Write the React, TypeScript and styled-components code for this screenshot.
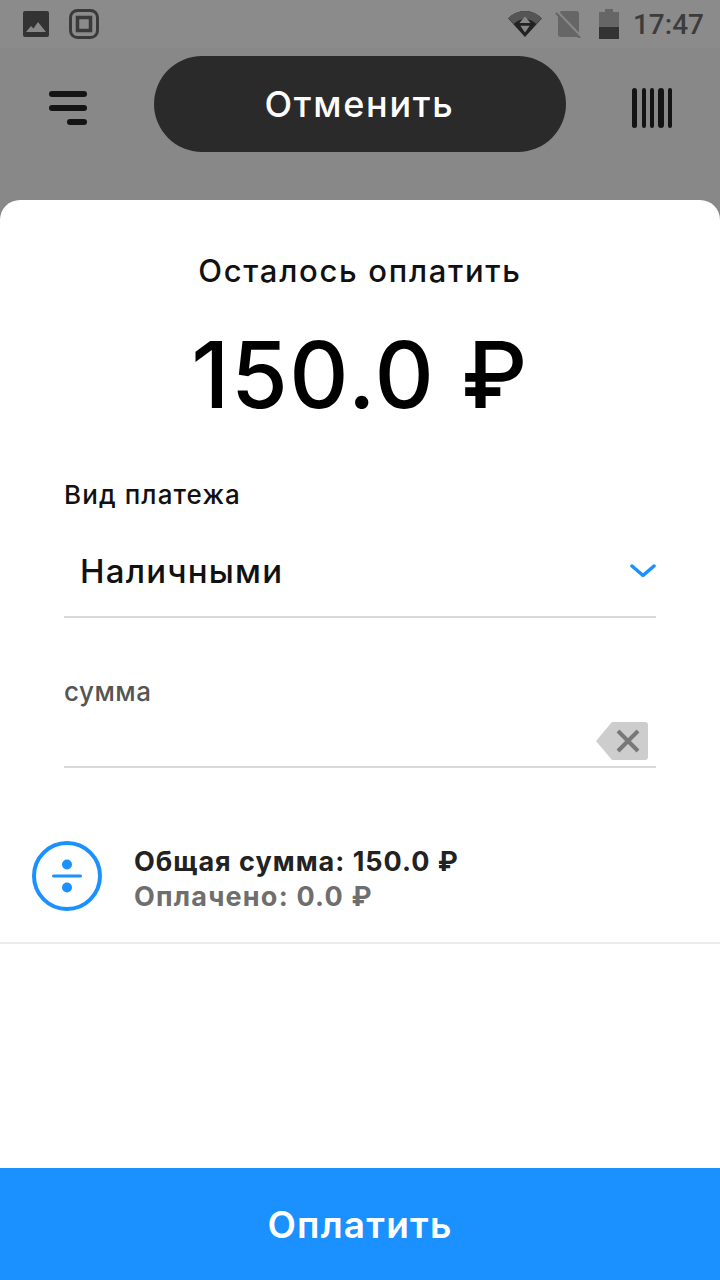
import styled, { createGlobalStyle } from "styled-components";

const GlobalStyle = createGlobalStyle`
  html, body {
    margin: 0;
    padding: 0;
    background: #888888;
  }
  * {
    box-sizing: border-box;
  }
`;

const FONT = `Inter, "Noto Sans", sans-serif`;

function App() {
  return (
    <Page>
      <GlobalStyle />
      <StatusBar>
        <StatusGroup>
          <svg width="26" height="26" viewBox="0 0 26 26">
            <rect x="0" y="0" width="26" height="26" rx="2" fill="#333" />
            <path d="M3 21l5-6 2.500 2.500L15 11l8 10z" fill="#888" />
          </svg>
          <svg width="30" height="30" viewBox="0 0 30 30" fill="none">
            <rect x="1.500" y="1.500" width="27" height="27" rx="7" stroke="#3a3a3a" strokeWidth="3" />
            <rect x="8.500" y="8.500" width="13" height="13" stroke="#3a3a3a" strokeWidth="3.500" />
          </svg>
        </StatusGroup>
        <StatusRight>
          <svg width="34" height="28" viewBox="0 0 36 30">
            <path d="M0 9C5 4 11 1 18 1s13 3 18 8L18 29z" fill="#222" />
            <path d="M0 9C5 4 11 1 18 1s13 3 18 8l-6 6c-3-3-7-5-12-5S9 12 6 15z" fill="#555" />
            <path d="M18 7l6 7H12zM18 24l-5-7h10z" fill="#888" />
          </svg>
          <svg width="26" height="28" viewBox="0 0 26 28" fill="none">
            <path d="M6 1h15a3 3 0 0 1 3 3v23H6a3 3 0 0 1-3-3V5z" fill="#666" />
            <path d="M1 3l24 25" stroke="#666" strokeWidth="2.500" />
            <path d="M1 0l24 25" stroke="#888" strokeWidth="2" />
          </svg>
          <BatteryIcon width="20" height="30" viewBox="0 0 20 30">
            <path d="M6 0h8v3h6v27H0V3h6z" fill="#666" />
            <rect x="0" y="18" width="20" height="12" fill="#333" />
          </BatteryIcon>
          <Clock>17:47</Clock>
        </StatusRight>
      </StatusBar>
      <Header>
        <MenuIcon width="38" height="34" viewBox="0 0 38 34" fill="#141414">
          <rect x="0" y="0" width="38" height="6" rx="3" />
          <rect x="0" y="14" width="38" height="6" rx="3" />
          <rect x="18" y="28" width="20" height="6" rx="3" />
        </MenuIcon>
        <CancelButton>Отменить</CancelButton>
        <MenuIcon width="40" height="40" viewBox="0 0 40 40" fill="#141414">
          <rect x="0" y="0" width="5" height="40" rx="2.500" />
          <rect x="10" y="0" width="4" height="40" rx="2" />
          <rect x="18" y="0" width="4" height="40" rx="2" />
          <rect x="26" y="0" width="6" height="40" rx="3" />
          <rect x="36" y="0" width="4" height="40" rx="2" />
        </MenuIcon>
      </Header>
      <Sheet>
        <Title>Осталось оплатить</Title>
        <Amount>150.0 ₽</Amount>
        <Form>
          <FieldLabel>Вид платежа</FieldLabel>
          <SelectRow>
            <SelectValue>Наличными</SelectValue>
            <svg width="26" height="14" viewBox="0 0 26 14" fill="none">
              <path d="M2 2l11 9.500L24 2" stroke="#1a91ff" strokeWidth="3.500" strokeLinecap="round" strokeLinejoin="round" />
            </svg>
          </SelectRow>
          <SumLabel>сумма</SumLabel>
          <SumRow>
            <svg width="52" height="38" viewBox="0 0 52 38">
              <path d="M16 0h33a3 3 0 0 1 3 3v32a3 3 0 0 1-3 3H16L0 19z" fill="#cdcdcd" />
              <path d="M22 9l20 20M42 9L22 29" stroke="#787878" strokeWidth="4" />
            </svg>
          </SumRow>
        </Form>
        <Summary>
          <svg width="70" height="70" viewBox="0 0 70 70" fill="none">
            <circle cx="35" cy="35" r="33" stroke="#1a91ff" strokeWidth="4" />
            <circle cx="35" cy="23.500" r="5" fill="#1a91ff" />
            <circle cx="35" cy="46.500" r="5" fill="#1a91ff" />
            <rect x="20" y="33.500" width="30" height="3" rx="1.500" fill="#1a91ff" />
          </svg>
          <SummaryText>
            <SummaryLine>Общая сумма: 150.0 ₽</SummaryLine>
            <SummaryLine $muted>Оплачено: 0.0 ₽</SummaryLine>
          </SummaryText>
        </Summary>
        <PayButton>Оплатить</PayButton>
      </Sheet>
    </Page>
  );
}

export default App;

const Page = styled.div`
  display: flex;
  flex-direction: column;
  width: 720px;
  height: 1280px;
  overflow: hidden;
  background: #888888;
  font-family: ${FONT};
`;

const StatusBar = styled.div`
  display: flex;
  align-items: center;
  justify-content: space-between;
  height: 48px;
  padding: 0 16px 0 23px;
  background: #8b8b8b;
`;

const StatusGroup = styled.div`
  display: flex;
  align-items: center;
  gap: 20px;
`;

const StatusRight = styled.div`
  display: flex;
  align-items: center;
  gap: 13px;
`;

const BatteryIcon = styled.svg`
  margin-left: 5px;
`;

const Clock = styled.span`
  font-family: Roboto, sans-serif;
  font-size: 28px;
  font-weight: 500;
  color: #3c3c3c;
  margin-left: 1px;
`;

const Header = styled.div`
  display: flex;
  align-items: center;
  justify-content: space-between;
  height: 152px;
  padding: 0 48px 40px 49px;
`;

const MenuIcon = styled.svg`
  margin-top: 8px;
`;

const CancelButton = styled.button`
  width: 412px;
  height: 96px;
  border: none;
  border-radius: 48px;
  background: #2a2a2a;
  color: #ffffff;
  font-family: ${FONT};
  font-size: 36px;
  font-weight: 500;
  letter-spacing: 1.7px;
`;

const Sheet = styled.div`
  flex: 1;
  display: flex;
  flex-direction: column;
  background: #ffffff;
  border-radius: 20px 20px 0 0;
`;

const Title = styled.div`
  margin-top: 51px;
  text-align: center;
  font-size: 31px;
  line-height: 40px;
  font-weight: 500;
  letter-spacing: 1.7px;
  color: #111111;
`;

const Amount = styled.div`
  margin-top: 29px;
  text-align: center;
  font-size: 92px;
  line-height: 110px;
  font-weight: 500;
  letter-spacing: 1.5px;
  color: #000000;
`;

const Form = styled.div`
  display: flex;
  flex-direction: column;
  margin: 47px 64px 0;
`;

const FieldLabel = styled.div`
  font-size: 26px;
  line-height: 36px;
  font-weight: 500;
  letter-spacing: 1.1px;
  color: #111111;
`;

const SelectRow = styled.div`
  display: flex;
  align-items: center;
  justify-content: space-between;
  height: 105px;
  padding: 13px 0 0 16px;
  border-bottom: 2px solid #d8d8d8;
`;

const SelectValue = styled.span`
  font-size: 33px;
  font-weight: 500;
  letter-spacing: 1.2px;
  color: #111111;
`;

const SumLabel = styled.div`
  margin-top: 56px;
  font-size: 26px;
  line-height: 36px;
  font-weight: 500;
  letter-spacing: 0.5px;
  color: #555555;
`;

const SumRow = styled.div`
  display: flex;
  justify-content: flex-end;
  height: 58px;
  padding: 12px 8px 0 0;
  border-bottom: 2px solid #d8d8d8;
`;

const Summary = styled.div`
  display: flex;
  align-items: center;
  gap: 32px;
  height: 176px;
  padding: 44px 0 2px 32px;
  border-bottom: 2px solid #ebebeb;
`;

const SummaryText = styled.div`
  display: flex;
  flex-direction: column;
  margin-top: 6px;
`;

const SummaryLine = styled.div<{ $muted?: boolean }>`
  font-size: 27px;
  line-height: 35px;
  font-weight: 700;
  letter-spacing: ${(p) => (p.$muted ? "1.2px" : "1px")};
  color: ${(p) => (p.$muted ? "#6e6e6e" : "#222222")};
`;

const PayButton = styled.button`
  margin-top: auto;
  height: 112px;
  border: none;
  background: #1a91ff;
  color: #ffffff;
  font-family: ${FONT};
  font-size: 37px;
  font-weight: 600;
  letter-spacing: 1.2px;
`;
